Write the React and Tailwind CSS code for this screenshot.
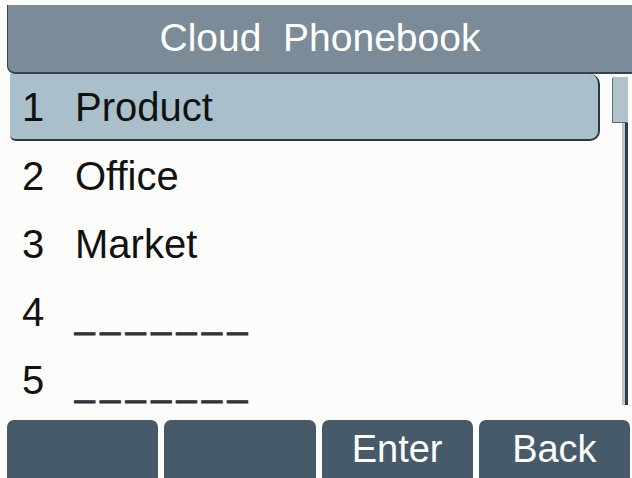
import React from "react";

const entries = [
  { id: 1, name: "Product" },
  { id: 2, name: "Office" },
  { id: 3, name: "Market" },
  { id: 4, name: null },
  { id: 5, name: null },
];

const softkeys = ["", "", "Enter", "Back"];

function Row({ entry, selected }) {
  const label = entry.name ? (
    <span>{entry.name}</span>
  ) : (
    <span className="inline-block translate-y-[4px] text-[35px] tracking-[6px] text-[#333] [-webkit-text-stroke:1.2px_#333]">
      _______
    </span>
  );

  if (selected) {
    return (
      <div className="h-[68px]">
        <div className="flex h-[67px] items-center rounded-r-[10px] rounded-bl-[6px] border-r-2 border-b-2 border-[#2b3943] bg-[#a9bfca] leading-[68px]">
          <span className="w-[65px] pl-[12px]">{entry.id}</span>
          {label}
        </div>
      </div>
    );
  }

  return (
    <div className="flex h-[68px] leading-[68px]">
      <span className="w-[65px] pl-[12px]">{entry.id}</span>
      {label}
    </div>
  );
}

export default function App() {
  return (
    <div
      className="flex h-[478px] w-[632px] flex-col overflow-hidden bg-[#fcfcfb] text-[40px] text-[#111]"
      style={{ fontFamily: '"Liberation Sans", Arial, sans-serif' }}
    >
      {/* title bar */}
      <div className="mt-[5px] ml-[7px] flex h-[69px] items-center justify-center rounded-bl-[8px] border-l border-b-2 border-[#34434e] bg-[#7b8b97] text-[39px] whitespace-pre text-white">
        Cloud  Phonebook
      </div>

      {/* list + scrollbar */}
      <div className="flex h-[343px]">
        <div className="w-[600px] pl-[10px]">
          {entries.map((e, i) => (
            <Row key={e.id} entry={e} selected={i === 0} />
          ))}
        </div>
        <div className="flex w-[32px] flex-col items-end pr-[4px]">
          <div className="mt-[3px] h-[46px] w-[16px] rounded-tl-[3px] border-l border-b border-[#5d6c77] bg-[#b0c2cc]" />
          <div className="flex h-[282px] w-[6px]">
            <div className="w-[3px] bg-[#b7c6cf]" />
            <div className="w-[3px] bg-[#2e3c46]" />
          </div>
        </div>
      </div>

      {/* soft keys */}
      <div className="mt-[3px] flex flex-1 gap-[6px] pl-[7px] pr-[2px]">
        {softkeys.map((k, i) => (
          <div
            key={i}
            className="flex flex-1 items-center justify-center rounded-t-[7px] bg-[#465a6a] text-[38px] text-white"
          >
            {k}
          </div>
        ))}
      </div>
    </div>
  );
}
